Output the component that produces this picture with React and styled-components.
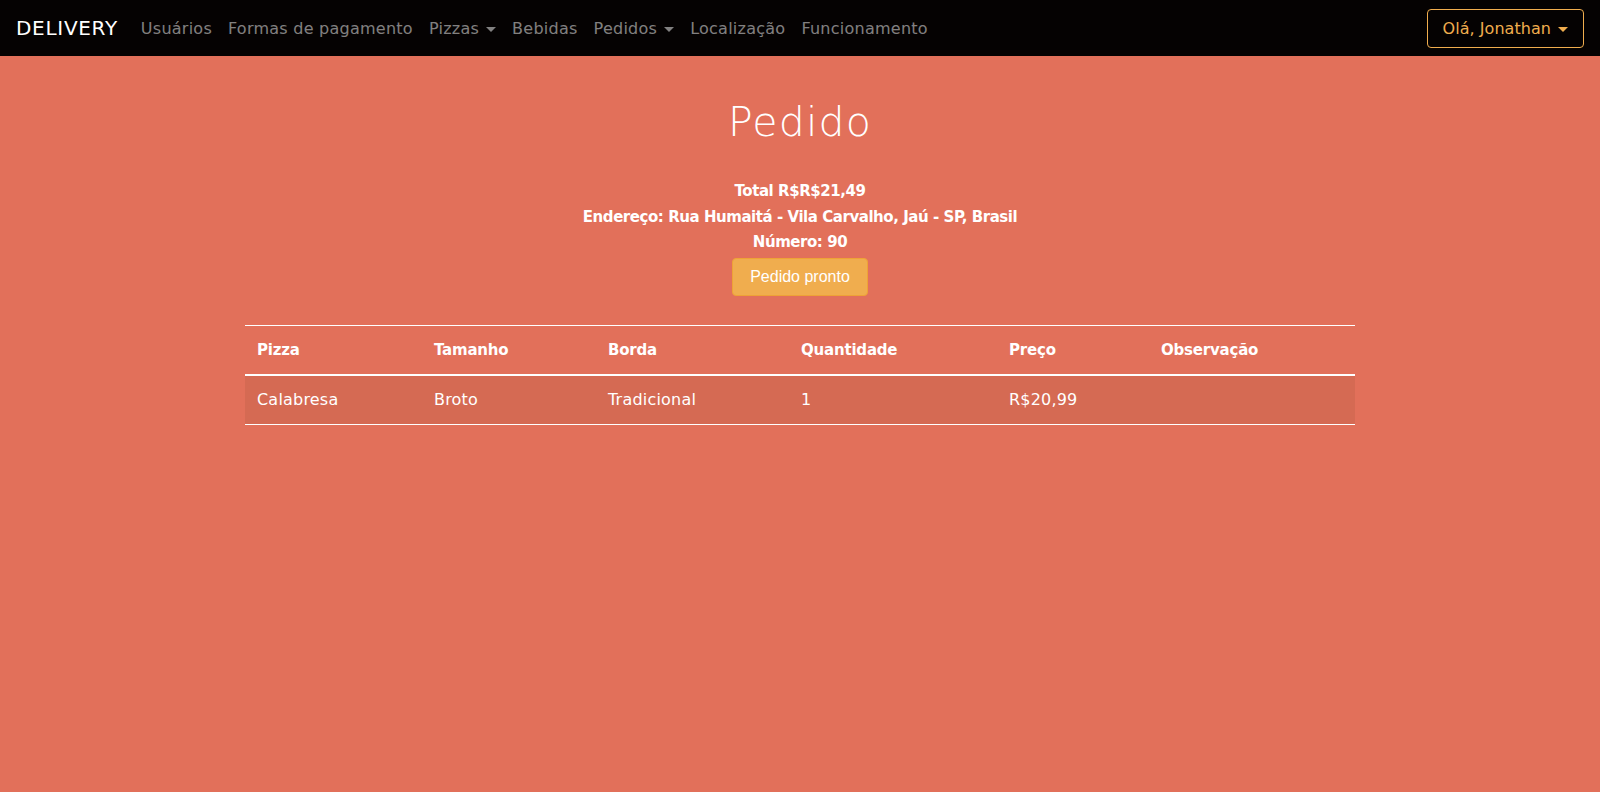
import React from 'react'
import styled, { createGlobalStyle } from 'styled-components'

const GlobalStyle = createGlobalStyle`
  html, body {
    margin: 0;
    padding: 0;
    background: #e2705a;
    font-family: "DejaVu Sans", "Noto Sans", sans-serif;
  }
  * { box-sizing: border-box; }
`

const Page = styled.div`
  min-height: 792px;
  background: #e2705a;
  color: #fff;
`

const Navbar = styled.nav`
  height: 56px;
  background: #050202;
  display: flex;
  align-items: center;
  justify-content: space-between;
  padding: 0 16px;
`

const LeftNav = styled.div`
  display: flex;
  align-items: center;
`

const Brand = styled.span`
  color: #fff;
  font-size: 20px;
  margin-right: 15px;
  letter-spacing: 0.7px;
`

const NavLink = styled.span`
  color: rgba(255, 255, 255, 0.5);
  font-size: 16px;
  padding: 0 8px;
  display: flex;
  align-items: center;
  letter-spacing: 0.25px;
`

const Caret = styled.span`
  display: inline-block;
  margin-left: 7px;
  width: 0;
  height: 0;
  border-left: 5px solid transparent;
  border-right: 5px solid transparent;
  border-top: 5px solid ${p => p.color || 'rgba(255,255,255,0.5)'};
  margin-top: 2px;
`

const UserButton = styled.button`
  height: 39px;
  padding: 0 15px;
  background: transparent;
  border: 1px solid #f0ad4e;
  border-radius: 4px;
  color: #f0ad4e;
  font-family: inherit;
  font-size: 16px;
  display: flex;
  align-items: center;
  letter-spacing: 0.05px;
`

const Main = styled.main`
  width: 1110px;
  margin: 0 auto;
  display: flex;
  flex-direction: column;
  align-items: center;
`

const Title = styled.h1`
  font-weight: 300;
  font-size: 41px;
  line-height: 48px;
  margin: 42px 0 33px;
  letter-spacing: 1.2px;
`

const Info = styled.p`
  margin: 0;
  font-size: 15px;
  font-weight: 600;
  line-height: 25.5px;
  text-align: center;
  letter-spacing: -0.45px;
`

const ReadyButton = styled.button`
  margin-top: 2px;
  height: 38px;
  padding: 0 17px;
  background: #f0ad4e;
  border: 1px solid #eea236;
  border-radius: 4px;
  color: #fff;
  font-family: "Liberation Sans", Arial, sans-serif;
  font-size: 16px;
`

const Table = styled.table`
  width: 100%;
  margin-top: 29px;
  border-collapse: collapse;
  color: #fff;
`

const Th = styled.th`
  text-align: left;
  font-size: 15px;
  font-weight: 600;
  padding: 0 12px;
  height: 50px;
  border-top: 1px solid #fff;
  border-bottom: 2px solid #fff;
  width: ${p => p.w || 'auto'};
  letter-spacing: -0.2px;
`

const Row = styled.tr`
  background: #d56a53;
`

const Td = styled.td`
  padding: 0 12px;
  height: 49px;
  font-size: 16px;
  border-bottom: 1px solid #fff;
  letter-spacing: 0.2px;
`

const columns = [
  { label: 'Pizza', w: '177px' },
  { label: 'Tamanho', w: '174px' },
  { label: 'Borda', w: '193px' },
  { label: 'Quantidade', w: '208px' },
  { label: 'Preço', w: '152px' },
  { label: 'Observação' },
]

const items = [
  ['Calabresa', 'Broto', 'Tradicional', '1', 'R$20,99', ''],
]

const links = [
  { label: 'Usuários' },
  { label: 'Formas de pagamento' },
  { label: 'Pizzas', drop: true },
  { label: 'Bebidas' },
  { label: 'Pedidos', drop: true },
  { label: 'Localização' },
  { label: 'Funcionamento' },
]

export default function App() {
  return (
    <Page>
      <GlobalStyle />
      <Navbar>
        <LeftNav>
          <Brand>DELIVERY</Brand>
          {links.map(l => (
            <NavLink key={l.label}>
              {l.label}
              {l.drop && <Caret />}
            </NavLink>
          ))}
        </LeftNav>
        <UserButton>
          Olá, Jonathan
          <Caret color="#f0ad4e" />
        </UserButton>
      </Navbar>
      <Main>
        <Title>Pedido</Title>
        <Info>Total R$R$21,49</Info>
        <Info>Endereço: Rua Humaitá - Vila Carvalho, Jaú - SP, Brasil</Info>
        <Info>Número: 90</Info>
        <ReadyButton>Pedido pronto</ReadyButton>
        <Table>
          <thead>
            <tr>
              {columns.map(c => (
                <Th key={c.label} w={c.w}>{c.label}</Th>
              ))}
            </tr>
          </thead>
          <tbody>
            {items.map((row, i) => (
              <Row key={i}>
                {row.map((cell, j) => (
                  <Td key={j}>{cell}</Td>
                ))}
              </Row>
            ))}
          </tbody>
        </Table>
      </Main>
    </Page>
  )
}
